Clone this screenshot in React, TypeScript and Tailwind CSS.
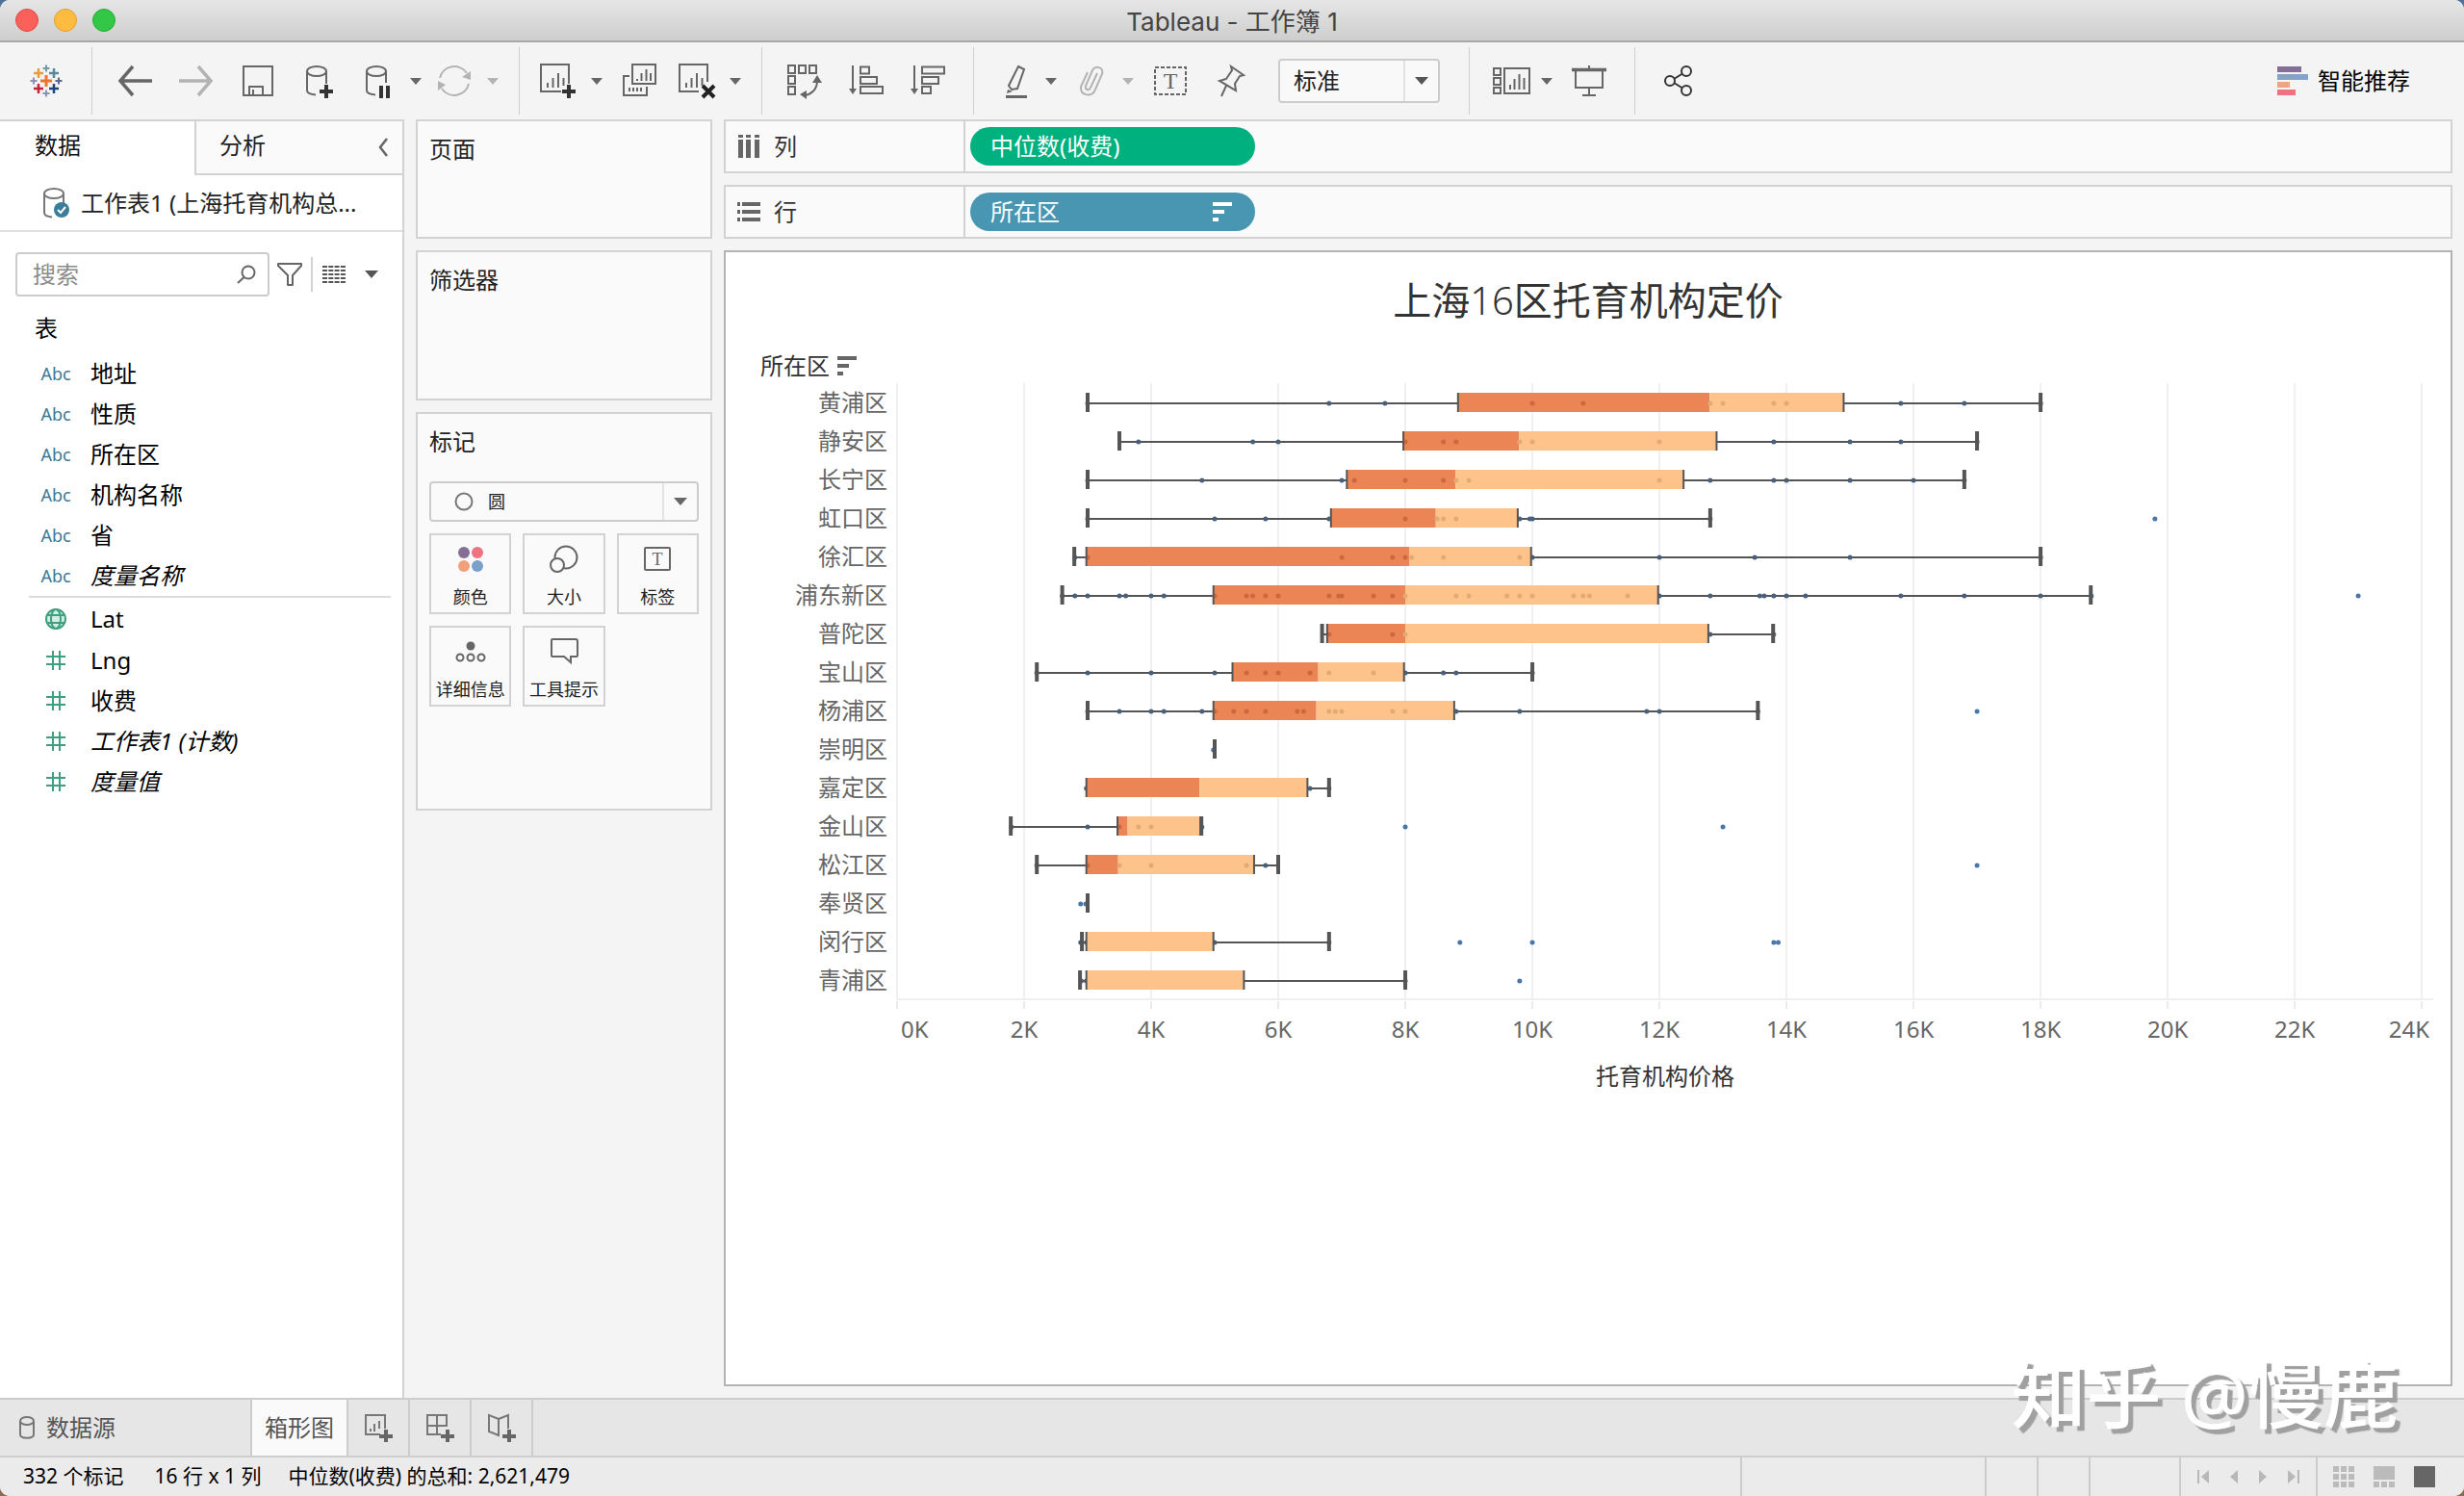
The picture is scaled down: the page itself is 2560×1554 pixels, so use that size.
import type { ReactNode } from "react";
import clsx from "clsx";

// ---------- data ----------

type Box = {
  name: string;
  low: number;
  high: number;
  q1?: number;
  mid?: number;
  q3?: number;
  dots: number[];
};

// highest value of the x axis, in thousands
const AXIS_MAX = 24.18;
const ROW_HEIGHT = 40;

const TICKS = [0, 2, 4, 6, 8, 10, 12, 14, 16, 18, 20, 22, 24];

const BOXES: Box[] = [
  { name: "黄浦区", low: 3, q1: 8.83, mid: 12.79, q3: 14.9, high: 18, dots: [3, 6.8, 7.68, 10, 10.8, 12.8, 13, 13.8, 14, 15.8, 16.8, 18] },
  { name: "静安区", low: 3.5, q1: 7.97, mid: 9.79, q3: 12.9, high: 17, dots: [3.8, 5.6, 6, 8, 8.6, 8.8, 9.8, 10, 12, 13.8, 15, 15.8, 17] },
  { name: "长宁区", low: 3, q1: 7.08, mid: 8.79, q3: 12.38, high: 16.8, dots: [3, 4.8, 7, 7.2, 8, 8.6, 8.8, 9, 12, 12.8, 13.8, 14, 15, 16, 16.8] },
  { name: "虹口区", low: 3, q1: 6.83, mid: 8.48, q3: 9.77, high: 12.8, dots: [3, 5, 5.8, 6.8, 8, 8.5, 8.6, 8.8, 9.8, 9.96, 10, 12.8, 19.8] },
  { name: "徐汇区", low: 2.79, q1: 2.98, mid: 8.06, q3: 9.98, high: 18, dots: [2.8, 3, 7, 7.8, 8, 8.1, 8.6, 9.8, 10, 12, 13.5, 15, 18] },
  { name: "浦东新区", low: 2.6, q1: 4.98, mid: 8, q3: 11.98, high: 18.79, dots: [2.6, 2.8, 3, 3.5, 3.6, 4, 4.2, 5, 5.5, 5.6, 5.8, 6, 6.8, 6.95, 7, 7.5, 7.8, 8, 8.8, 9, 9.6, 9.8, 10, 10.65, 10.8, 10.9, 11.5, 12, 12.8, 13.58, 13.65, 13.8, 14, 14.3, 15.8, 16.8, 18, 18.8, 23] },
  { name: "普陀区", low: 6.69, q1: 6.77, mid: 8, q3: 12.77, high: 13.79, dots: [6.8, 7.8, 8, 12.8, 13.8] },
  { name: "宝山区", low: 2.2, q1: 5.28, mid: 6.63, q3: 7.98, high: 10, dots: [2.2, 3, 4, 5, 5.5, 5.8, 6, 6.5, 6.8, 7.5, 8, 8.6, 8.8, 10] },
  { name: "杨浦区", low: 3, q1: 4.98, mid: 6.6, q3: 8.77, high: 13.55, dots: [3, 3.5, 4, 4.2, 4.8, 5, 5.3, 5.5, 5.8, 6.3, 6.4, 6.8, 6.9, 7, 7.8, 8, 8.8, 9.8, 11.8, 12, 13.55, 17] },
  { name: "崇明区", low: 5, high: 5, dots: [4.98] },
  { name: "嘉定区", low: 3, q1: 2.98, mid: 4.76, q3: 6.46, high: 6.8, dots: [2.98, 6.5, 6.8] },
  { name: "金山区", low: 1.79, q1: 3.47, mid: 3.63, q3: 4.78, high: 4.79, dots: [1.8, 3, 3.5, 3.8, 4, 4.8, 8, 13] },
  { name: "松江区", low: 2.2, q1: 2.98, mid: 3.48, q3: 5.62, high: 6, dots: [2.2, 3, 3.5, 4, 5.5, 5.8, 17] },
  { name: "奉贤区", low: 3, high: 3, dots: [2.89, 2.97] },
  { name: "闵行区", low: 2.91, q1: 2.98, mid: 2.98, q3: 4.98, high: 6.8, dots: [2.89, 2.98, 5, 6.8, 8.86, 10, 13.8, 13.87] },
  { name: "青浦区", low: 2.88, q1: 2.98, mid: 2.98, q3: 5.46, high: 8, dots: [2.9, 2.98, 8, 9.8] },
];

const FIELDS: { label: string; kind: "abc" | "globe" | "number"; italic?: boolean }[] = [
  { label: "地址", kind: "abc" },
  { label: "性质", kind: "abc" },
  { label: "所在区", kind: "abc" },
  { label: "机构名称", kind: "abc" },
  { label: "省", kind: "abc" },
  { label: "度量名称", kind: "abc", italic: true },
  { label: "Lat", kind: "globe" },
  { label: "Lng", kind: "number" },
  { label: "收费", kind: "number" },
  { label: "工作表1 (计数)", kind: "number", italic: true },
  { label: "度量值", kind: "number", italic: true },
];

// ---------- icons ----------

function Icon({ children, className }: { children: ReactNode; className?: string }) {
  return (
    <svg
      viewBox="0 0 40 40"
      className={clsx("w-10 h-10 shrink-0 overflow-visible", className ?? "text-[#666666]")}
      fill="none"
      stroke="currentColor"
      strokeWidth="2"
      aria-hidden="true"
    >
      {children}
    </svg>
  );
}

function Caret({ className }: { className?: string }) {
  return (
    <svg viewBox="0 0 14 8" className={clsx("shrink-0", className ?? "w-3 h-[7px] text-[#666666]")} fill="currentColor" aria-hidden="true">
      <path d="M0 0h14L7 8z" />
    </svg>
  );
}

function TableauLogo() {
  const marks: [number, number, number, number, string][] = [
    [20, 20, 6, 3, "#e8762c"],
    [12, 12, 5, 2.5, "#eb9a3c"],
    [28, 12, 5, 2.5, "#5b879b"],
    [12, 28, 5, 2.5, "#c72037"],
    [28, 28, 5, 2.5, "#1f447e"],
    [20, 7, 3.5, 2, "#7199a6"],
    [20, 33, 3.5, 2, "#8b92b4"],
    [7, 20, 3.5, 2, "#8b92b4"],
    [33, 20, 3.5, 2, "#5c6692"],
  ];
  return (
    <Icon>
      {marks.map(([x, y, r, w, color]) => (
        <path key={`${x}-${y}`} d={`M${x - r} ${y}h${r * 2}M${x} ${y - r}v${r * 2}`} stroke={color} strokeWidth={w} />
      ))}
    </Icon>
  );
}

const ArrowBack = () => (
  <Icon>
    <path d="M18 5L5 20l13 15M5 20h33" strokeWidth="3.5" />
  </Icon>
);

const ArrowForward = () => (
  <Icon className="text-[#b3b3b3]">
    <path d="M22 5l13 15-13 15M35 20H2" strokeWidth="3.5" />
  </Icon>
);

const Save = () => (
  <Icon>
    <path d="M5 5h30v30H5zM11 35v-9h14v9M15 29v6" />
  </Icon>
);

const DataPlus = () => (
  <Icon>
    <ellipse cx="17" cy="10" rx="10" ry="5" />
    <path d="M7 10v20c0 3 4 4 9 4.500M27 10v13" />
    <path d="M27 24v14M20 31h14" strokeWidth="4" className="text-[#333333]" stroke="currentColor" />
  </Icon>
);

const DataPause = () => (
  <Icon>
    <ellipse cx="19" cy="10" rx="10" ry="5" />
    <path d="M9 10v20c0 3 4 4 9 4.500M29 10v12" />
    <path d="M24 25v13M31 25v13" strokeWidth="4" className="text-[#333333]" stroke="currentColor" />
  </Icon>
);

const Refresh = () => (
  <Icon className="text-[#b3b3b3]">
    <path d="M5 17A15.500 15.500 0 0 1 33 12M35 23A15.500 15.500 0 0 1 7 28" />
    <path d="M37 10v9l-9-3zM3 30v-10l8 4z" fill="currentColor" stroke="none" />
  </Icon>
);

const SheetBars = () => <path d="M9 22v5M14.500 17v10M20 12v15M25.500 17v8" />;

const SheetPlus = () => (
  <Icon>
    <path d="M23 31H2V3h29v20" />
    <SheetBars />
    <path d="M31 24v14M24 31h14" strokeWidth="4" className="text-[#333333]" stroke="currentColor" />
  </Icon>
);

const SheetCopy = () => (
  <Icon>
    <path d="M13 3h24v20H13zM18 18v2M22.500 12v8M27.500 8v12M32 12v8" />
    <path d="M10 15H4v20h24v-9M10 27v4M14 27v4M18 27v4M22 27v4" />
  </Icon>
);

const SheetClear = () => (
  <Icon>
    <path d="M22 31H2V3h29v18" />
    <SheetBars />
    <path d="M26 25l12 12M38 25L26 37" strokeWidth="4" className="text-[#222222]" stroke="currentColor" />
  </Icon>
);

const Swap = () => (
  <Icon>
    <path d="M3 4h7v8H3zM14 4h7v8h-7zM25 4h7v8h-7zM3 15h7v8H3zM3 26h7v8H3z" />
    <path d="M33 20c0 9-6 14-13 15" />
    <path d="M28 22l5-8 5 8zM22 30v9l-7-5z" fill="currentColor" stroke="none" />
  </Icon>
);

const SortAsc = () => (
  <Icon>
    <path d="M6 4v26M14 5.500h9v7h-9zM14 16h17v7H14zM14 26h23v7H14z" />
    <path d="M2 28h8l-4 6z" fill="currentColor" stroke="none" />
  </Icon>
);

const SortDesc = () => (
  <Icon>
    <path d="M6 4v26M14 5.500h23v7H14zM14 16h17v7H14zM14 26h9v7h-9z" />
    <path d="M2 28h8l-4 6z" fill="currentColor" stroke="none" />
  </Icon>
);

const Highlighter = () => (
  <Icon>
    <path d="M26 5l6 3-7 20-6 1-3-4z" />
    <path d="M15 29l5 2-6 2z" fill="currentColor" stroke="none" />
    <path d="M13 36.500h22" strokeWidth="3" />
  </Icon>
);

const Clip = () => (
  <Icon className="text-[#b3b3b3]">
    <path d="M28 12l-7 15c-2 4-6 2-5-2l7-16c3-6 12-3 10 4l-8 18c-4 6-15 4-14-5l7-15" />
  </Icon>
);

const TextLabel = () => (
  <Icon>
    <rect x="4" y="6" width="32" height="28" strokeDasharray="4 2" />
    <text x="20" y="28" textAnchor="middle" fontSize="24" fill="currentColor" stroke="none" className="font-['Liberation_Serif',serif]">
      T
    </text>
  </Icon>
);

const Pin = () => (
  <Icon>
    <path d="M19 5l13 9-4 1-5 8 1 7-17-10 7-2 6-9zM14 25L9 36" />
  </Icon>
);

const Cards = () => (
  <Icon>
    <path d="M5 7h7v7H5zM5 17h7v7H5zM5 27h7v6H5zM16 7h26v26H16zM22 24v5M26.500 18v11M31.500 13v16M36.500 17v12" />
  </Icon>
);

const Presentation = () => (
  <Icon>
    <path d="M6 10v17h28V10M20 27v8M13 35h14M20 4v4" />
    <path d="M2 8.500h36" strokeWidth="3.5" />
  </Icon>
);

const Share = () => (
  <Icon className="text-[#333333]">
    <circle cx="29" cy="10" r="5" />
    <circle cx="12" cy="20" r="5" />
    <circle cx="29" cy="30" r="5" />
    <path d="M17 17.500l8-5M17 22.500l8 5" />
  </Icon>
);

function SortBars({ className }: { className?: string }) {
  return (
    <svg viewBox="0 0 20 20" className={clsx("w-5 h-5 shrink-0", className)} fill="currentColor" aria-hidden="true">
      <path d="M0 0h20v4H0zM0 8h12v4H0zM0 16h6v4H0z" />
    </svg>
  );
}

function FieldIcon({ kind }: { kind: "abc" | "globe" | "number" }) {
  if (kind === "abc") {
    return <span className="text-lg text-[#3c7896]">Abc</span>;
  }
  return (
    <svg viewBox="0 0 24 24" className="w-6 h-6 text-[#3fa07f]" fill="none" stroke="currentColor" strokeWidth="2" aria-hidden="true">
      {kind === "globe" ? (
        <>
          <circle cx="12" cy="12" r="10" fill="#d3efe5" />
          <ellipse cx="12" cy="12" rx="5" ry="10" />
          <path d="M3 8h18M3 16h18" />
        </>
      ) : (
        <path d="M9 2v20M16 2v20M2 8h20M2 16h20" />
      )}
    </svg>
  );
}

// ---------- toolbar ----------

function ToolButton({ label, children, narrow }: { label: string; children: ReactNode; narrow?: boolean }) {
  return (
    <button type="button" aria-label={label} className={clsx("h-16 flex items-center justify-center", narrow ? "w-14" : "w-16")}>
      {children}
    </button>
  );
}

function MenuButton({ label, disabled }: { label: string; disabled?: boolean }) {
  return (
    <button type="button" aria-label={label} disabled={disabled} className="w-6 h-16 flex items-center justify-center">
      <Caret className={disabled ? "w-3 h-[7px] text-[#b3b3b3]" : undefined} />
    </button>
  );
}

const Divider = () => <div className="w-px h-[70px] bg-[#cfcfcf]" />;

function Toolbar() {
  return (
    <div className="h-20 flex items-center bg-[#f4f4f4]">
      <button type="button" aria-label="Tableau" className="w-[95px] flex justify-center">
        <TableauLogo />
      </button>
      <Divider />
      <div className="flex items-center pl-3 pr-[15px]">
        <ToolButton label="撤消"><ArrowBack /></ToolButton>
        <ToolButton label="重做"><ArrowForward /></ToolButton>
        <ToolButton label="保存"><Save /></ToolButton>
        <ToolButton label="新建数据源"><DataPlus /></ToolButton>
        <ToolButton label="暂停自动更新" narrow><DataPause /></ToolButton>
        <MenuButton label="自动更新选项" />
        <ToolButton label="运行更新" narrow><Refresh /></ToolButton>
        <MenuButton label="更新选项" disabled />
      </div>
      <Divider />
      <div className="flex items-center pl-3 pr-[15px]">
        <ToolButton label="新建工作表" narrow><SheetPlus /></ToolButton>
        <MenuButton label="新建选项" />
        <ToolButton label="复制工作表"><SheetCopy /></ToolButton>
        <ToolButton label="清除工作表" narrow><SheetClear /></ToolButton>
        <MenuButton label="清除选项" />
      </div>
      <Divider />
      <div className="flex items-center pl-3 pr-[15px]">
        <ToolButton label="交换行和列"><Swap /></ToolButton>
        <ToolButton label="升序排序"><SortAsc /></ToolButton>
        <ToolButton label="降序排序"><SortDesc /></ToolButton>
      </div>
      <Divider />
      <div className="flex items-center pl-3 pr-[30px]">
        <ToolButton label="突出显示" narrow><Highlighter /></ToolButton>
        <MenuButton label="突出显示选项" />
        <ToolButton label="组成员" narrow><Clip /></ToolButton>
        <MenuButton label="组选项" disabled />
        <ToolButton label="显示标记标签"><TextLabel /></ToolButton>
        <ToolButton label="固定轴"><Pin /></ToolButton>
        <div className="ml-4 w-[168px] h-[46px] flex border-2 border-[#cccccc] rounded-sm bg-[#f9f9f9]">
          <select aria-label="适合" className="flex-1 min-w-0 appearance-none pl-3.5 text-2xl leading-9 text-[#222222]">
            <option>标准</option>
          </select>
          <div className="w-9 border-l-2 border-[#e3e3e3] flex items-center justify-center pointer-events-none">
            <Caret className="w-3.5 h-2 text-[#555555]" />
          </div>
        </div>
      </div>
      <Divider />
      <div className="flex items-center pl-3 pr-[15px]">
        <ToolButton label="显示/隐藏卡" narrow><Cards /></ToolButton>
        <MenuButton label="卡选项" />
        <ToolButton label="演示模式"><Presentation /></ToolButton>
      </div>
      <Divider />
      <div className="pl-3">
        <ToolButton label="共享"><Share /></ToolButton>
      </div>
      <button type="button" className="ml-auto mr-14 flex items-center gap-2.5 text-2xl text-black">
        <svg viewBox="0 0 32 30" className="w-8 h-[30px]" aria-hidden="true">
          <path d="M0 0h25v6H0z" fill="#856f96" />
          <path d="M0 8h32v6H0z" fill="#84a3c8" />
          <path d="M0 16h13v6H0z" fill="#eda684" />
          <path d="M0 24h19v6H0z" fill="#f0717f" />
        </svg>
        智能推荐
      </button>
    </div>
  );
}

// ---------- data pane ----------

function DataPane() {
  return (
    <aside className="w-[420px] shrink-0 flex flex-col bg-white border-t-2 border-r-2 border-[#d2d2d2]">
      <div className="flex h-14 text-2xl leading-[50px]">
        <button type="button" className="w-[202px] pl-9 pb-1.5 text-left text-[#111111]">数据</button>
        <div className="flex-1 flex items-center justify-between pl-6 pr-3.5 bg-[#fafafa] border-l-2 border-b-2 border-[#d2d2d2]">
          <button type="button" className="pb-1 text-[#222222]">分析</button>
          <button type="button" aria-label="折叠">
            <svg viewBox="0 0 12 20" className="w-3 h-5" fill="none" stroke="#666666" strokeWidth="2.5" aria-hidden="true">
              <path d="M10 1L3 10l7 9" />
            </svg>
          </button>
        </div>
      </div>
      <button type="button" className="h-[59px] flex items-center gap-3 pl-11 border-b-2 border-[#e0e0e0] text-2xl text-[#222222]">
        <svg viewBox="0 0 28 34" className="w-7 h-[34px] shrink-0" fill="none" stroke="#777777" strokeWidth="2" aria-hidden="true">
          <ellipse cx="12" cy="7" rx="10" ry="5" />
          <path d="M2 7v20c0 3 3 4 8 4.500M22 7v10" />
          <circle cx="20" cy="24" r="8" fill="#3a7c99" stroke="none" />
          <path d="M16 24l3 3 5-6" stroke="#ffffff" />
        </svg>
        工作表1 (上海托育机构总...
      </button>
      <div className="flex items-center mt-[21px] ml-4">
        <label className="w-[264px] h-[46px] flex items-center pl-3.5 pr-3 border-2 border-[#cccccc] rounded-sm">
          <input type="text" placeholder="搜索" aria-label="搜索" className="flex-1 min-w-0 pl-0.5 text-2xl leading-9 outline-none placeholder:text-[#8c8c8c]" />
          <svg viewBox="0 0 20 20" className="w-5 h-5" fill="none" stroke="#666666" strokeWidth="2" aria-hidden="true">
            <circle cx="12" cy="8" r="6.500" />
            <path d="M7.500 13L1 19" />
          </svg>
        </label>
        <button type="button" aria-label="筛选字段" className="ml-[7px]">
          <svg viewBox="0 0 28 28" className="w-7 h-7" fill="none" stroke="#666666" strokeWidth="2" strokeLinejoin="round" aria-hidden="true">
            <path d="M2 3h24v2L17 15v10h-5V15L2 5z" />
          </svg>
        </button>
        <div className="mx-2 w-0.5 h-9 bg-[#d2d2d2]" />
        <button type="button" aria-label="视图" className="ml-0.5 flex items-center gap-5">
          <svg viewBox="0 0 24 20" className="w-6 h-5" stroke="#555555" strokeWidth="2" aria-hidden="true">
            <path d="M0 2h24M0 6h24M0 10h24M0 14h24M0 18h24" strokeDasharray="5 1.300" />
          </svg>
          <Caret className="w-3.5 h-2 text-[#555555]" />
        </button>
      </div>
      <h2 className="mt-[15px] pl-9 text-2xl leading-9 text-black">表</h2>
      <ul className="mt-2 pl-[30px] pr-3 text-2xl text-black">
        {FIELDS.map((field) => (
          <li
            key={field.label}
            className={clsx(
              "flex items-center",
              field.kind === "globe" ? "h-[46px] border-t-2 border-[#dddddd]" : "h-[42px]",
            )}
          >
            <span className="w-14 flex justify-center shrink-0">
              <FieldIcon kind={field.kind} />
            </span>
            <span className={clsx("pl-2 leading-9", field.italic && "italic")}>{field.label}</span>
          </li>
        ))}
      </ul>
    </aside>
  );
}

// ---------- cards ----------

function MarkButton({ label, children }: { label: string; children: ReactNode }) {
  return (
    <button type="button" className="h-[84px] flex flex-col items-center justify-between pt-1 pb-0.5 border-2 border-[#d2d2d2] text-lg leading-7 text-[#222222] whitespace-nowrap">
      {children}
      {label}
    </button>
  );
}

function CardColumn() {
  return (
    <div className="w-[308px] shrink-0 flex flex-col gap-3 text-2xl leading-9 text-[#222222]">
      <section className="h-[124px] px-3 pt-[11px] bg-[#fafafa] border-2 border-[#d2d2d2]">页面</section>
      <section className="h-[156px] px-3 pt-[11px] bg-[#fafafa] border-2 border-[#d2d2d2]">筛选器</section>
      <section className="h-[414px] px-3 pt-[11px] bg-[#fafafa] border-2 border-[#d2d2d2]">
        <h2>标记</h2>
        <div className="mt-[23px] h-[42px] flex items-center border-2 border-[#cccccc] rounded-sm">
          <svg viewBox="0 0 20 20" className="ml-6 w-5 h-5" fill="none" stroke="#777777" strokeWidth="2" aria-hidden="true">
            <circle cx="10" cy="10" r="8.500" />
          </svg>
          <select aria-label="标记类型" className="ml-[15px] flex-1 min-w-0 appearance-none text-lg leading-7">
            <option>圆</option>
          </select>
          <div className="w-9 h-full border-l-2 border-[#e3e3e3] flex items-center justify-center pointer-events-none">
            <Caret className="w-3.5 h-2 text-[#666666]" />
          </div>
        </div>
        <div className="mt-3 grid grid-cols-3 gap-3">
          <MarkButton label="颜色">
            <Icon>
              <circle cx="13" cy="14" r="6" fill="#856f96" stroke="none" />
              <circle cx="27" cy="14" r="6" fill="#f0717f" stroke="none" />
              <circle cx="13" cy="28" r="6" fill="#f1a07c" stroke="none" />
              <circle cx="27" cy="28" r="6" fill="#7ba0ca" stroke="none" />
            </Icon>
          </MarkButton>
          <MarkButton label="大小">
            <Icon>
              <circle cx="22" cy="19" r="11.500" />
              <circle cx="13" cy="27" r="7" fill="#fafafa" />
            </Icon>
          </MarkButton>
          <MarkButton label="标签">
            <Icon>
              <rect x="7" y="9" width="26" height="23" rx="1" />
              <text x="20" y="27" textAnchor="middle" fontSize="18" fill="currentColor" stroke="none" className="font-['Liberation_Serif',serif]">
                T
              </text>
            </Icon>
          </MarkButton>
          <MarkButton label="详细信息">
            <Icon>
              <circle cx="20" cy="15" r="4.500" fill="currentColor" stroke="none" />
              <circle cx="9" cy="27" r="3.500" />
              <circle cx="20" cy="27" r="3.500" />
              <circle cx="31" cy="27" r="3.500" />
            </Icon>
          </MarkButton>
          <MarkButton label="工具提示">
            <Icon>
              <path d="M8 8h24a2 2 0 0 1 2 2v15a1 1 0 0 1-1 1h-6v6l-7-6H8a1 1 0 0 1-1-1V9a1 1 0 0 1 1-1z" />
            </Icon>
          </MarkButton>
        </div>
      </section>
    </div>
  );
}

// ---------- sheet ----------

function Shelf({ label, icon, children }: { label: string; icon: ReactNode; children: ReactNode }) {
  return (
    <div className="h-14 shrink-0 flex bg-[#fafafa] border-2 border-[#d2d2d2] text-2xl leading-9">
      <div className="w-[249px] flex items-center gap-3.5 pl-3 border-r-2 border-[#d2d2d2] text-[#333333]">
        {icon}
        {label}
      </div>
      <div className="flex items-center pl-[5px]">{children}</div>
    </div>
  );
}

const pct = (value: number) => `${(value / AXIS_MAX) * 100}%`;

function BoxRow({ box, y }: { box: Box; y: number }) {
  const { low, high, q1, mid, q3, dots } = box;
  const hasBox = q1 !== undefined && mid !== undefined && q3 !== undefined;
  const covered = (value: number) => hasBox && value > q1 && value < q3;
  return (
    <g>
      {hasBox && (
        <>
          <line x1={pct(low)} x2={pct(q1)} y1={y + 1} y2={y + 1} stroke="#555555" strokeWidth="2" />
          <line x1={pct(q3)} x2={pct(high)} y1={y + 1} y2={y + 1} stroke="#555555" strokeWidth="2" />
        </>
      )}
      {dots.filter((value) => !covered(value)).map((value) => (
        <circle key={value} cx={pct(value)} cy={y + 1} r="2.5" fill={value > high || !hasBox ? "#4a77a8" : "#48607a"} />
      ))}
      {hasBox && (
        <>
          <rect x={pct(q1)} width={pct(mid - q1)} y={y - 10} height="20" fill="#ec8555" />
          <rect x={pct(mid)} width={pct(q3 - mid)} y={y - 10} height="20" fill="#fec38a" />
          {dots.filter(covered).map((value) => (
            <circle key={value} cx={pct(value)} cy={y + 1} r="2.5" fill={value < mid ? "#cb683f" : "#e2aa76"} />
          ))}
          <line x1={pct(q1)} x2={pct(q1)} y1={y - 10} y2={y + 10} stroke="#555555" strokeWidth="2" />
          <line x1={pct(q3)} x2={pct(q3)} y1={y - 10} y2={y + 10} stroke="#555555" strokeWidth="2" />
        </>
      )}
      {low !== q1 && !(hasBox && low > q1) && (
        <line x1={pct(low)} x2={pct(low)} y1={y - 10} y2={y + 10} stroke="#555555" strokeWidth="4" />
      )}
      <line x1={pct(high)} x2={pct(high)} y1={y - 10} y2={y + 10} stroke="#555555" strokeWidth="4" />
    </g>
  );
}

function BoxPlot() {
  const height = BOXES.length * ROW_HEIGHT;
  return (
    <svg className="block w-full h-[690px] overflow-visible" role="img" aria-label="上海16区托育机构定价">
      {TICKS.map((tick) => (
        <g key={tick}>
          <line x1={pct(tick)} x2={pct(tick)} y1="0" y2={height} stroke="#f0f0f0" strokeWidth="2" />
          <line x1={pct(tick)} x2={pct(tick)} y1={height + 2} y2={height + 10} stroke="#ebebeb" strokeWidth="2" />
          <text
            x={tick === 24 ? "100%" : pct(tick)}
            dx={tick === 0 ? 4 : tick === 24 ? -4 : 0}
            y={height + 40}
            textAnchor={tick === 0 ? "start" : tick === 24 ? "end" : "middle"}
            fontSize="24"
            fill="#666666"
          >
            {tick}K
          </text>
        </g>
      ))}
      <line x1="0" x2="100%" y1={height} y2={height} stroke="#efefef" strokeWidth="2" />
      {BOXES.map((box, i) => (
        <BoxRow key={box.name} box={box} y={i * ROW_HEIGHT + ROW_HEIGHT / 2} />
      ))}
    </svg>
  );
}

function Sheet() {
  return (
    <main className="flex-1 min-w-0 flex flex-col gap-3">
      <Shelf
        label="列"
        icon={
          <svg viewBox="0 0 24 24" className="w-6 h-6" fill="#666666" aria-hidden="true">
            <path d="M1 0h5v3H1zM9 0h5v3H9zM18 0h5v3h-5zM1 5h5v19H1zM9 5h5v19H9zM18 5h5v19h-5z" />
          </svg>
        }
      >
        <button type="button" className="w-[296px] h-10 flex items-center px-[21px] rounded-[20px] bg-[#00b180] text-white">
          中位数(收费)
        </button>
      </Shelf>
      <Shelf
        label="行"
        icon={
          <svg viewBox="0 0 24 24" className="w-6 h-6" fill="#666666" aria-hidden="true">
            <path d="M0 2h3v4H0zM0 10h3v4H0zM0 18h3v4H0zM5 2h19v4H5zM5 10h19v4H5zM5 18h19v4H5z" />
          </svg>
        }
      >
        <button type="button" className="w-[296px] h-10 flex items-center justify-between pl-[21px] pr-6 rounded-[20px] bg-[#4996b2] text-white">
          所在区
          <SortBars />
        </button>
      </Shelf>
      <section className="flex-1 bg-white border-2 border-[#b3b3b3]">
        <h1 className="pt-5 pb-5 text-center text-[40px] leading-[60px] text-[#333333]">
          上海<span className="font-light">16</span>区托育机构定价
        </h1>
        <div className="h-9 flex items-center gap-2 pl-9 text-2xl text-[#333333]">
          所在区
          <SortBars className="text-[#666666]" />
        </div>
        <div className="flex pr-[18px]">
          <ul className="w-[178px] shrink-0 pr-2.5 text-right text-2xl text-[#666666]">
            {BOXES.map((box) => (
              <li key={box.name} className="h-10 leading-10">{box.name}</li>
            ))}
          </ul>
          <div className="flex-1 min-w-0">
            <BoxPlot />
            <p className="text-center text-2xl leading-[60px] text-[#333333]">托育机构价格</p>
          </div>
        </div>
      </section>
    </main>
  );
}

// ---------- bottom bars ----------

function SheetTabs() {
  return (
    <nav className="h-[60px] flex bg-[#e6e6e6] border-t-2 border-[#cccccc] text-2xl leading-9 text-[#555555]">
      <button type="button" className="w-[262px] flex items-center gap-3 pl-5 border-r-2 border-[#cccccc]">
        <svg viewBox="0 0 16 24" className="w-4 h-6" fill="none" stroke="#777777" strokeWidth="2" aria-hidden="true">
          <ellipse cx="8" cy="5" rx="7" ry="4" />
          <path d="M1 5v14c0 5 14 5 14 0V5" />
        </svg>
        数据源
      </button>
      <button type="button" className="w-[100px] bg-[#fafafa] border-r-2 border-[#cccccc]">箱形图</button>
      <button type="button" aria-label="新建工作表" className="w-16 flex items-center justify-center border-r-2 border-[#cccccc]">
        <svg viewBox="0 0 32 32" className="w-8 h-8" fill="none" stroke="#777777" strokeWidth="2" aria-hidden="true">
          <path d="M18 23H3V3h20v14M8 17v3M12 12v8M17 9v8" />
          <path d="M24 18v13M17 25h14" stroke="#666666" strokeWidth="4" />
        </svg>
      </button>
      <button type="button" aria-label="新建仪表板" className="w-16 flex items-center justify-center border-r-2 border-[#cccccc]">
        <svg viewBox="0 0 32 32" className="w-8 h-8" fill="none" stroke="#777777" strokeWidth="2" aria-hidden="true">
          <path d="M17 23H3V3h20v11H3M13 3v20" />
          <path d="M24 18v13M17 25h14" stroke="#666666" strokeWidth="4" />
        </svg>
      </button>
      <button type="button" aria-label="新建故事" className="w-16 flex items-center justify-center border-r-2 border-[#cccccc]">
        <svg viewBox="0 0 32 32" className="w-8 h-8" fill="none" stroke="#777777" strokeWidth="2" aria-hidden="true">
          <path d="M13 7L3 3v17l10 4zM13 7l10-4v14" />
          <path d="M24 18v13M17 25h14" stroke="#666666" strokeWidth="4" />
        </svg>
      </button>
    </nav>
  );
}

function StatusBar() {
  return (
    <footer className="h-[42px] flex items-center bg-[#ebebeb] border-t-2 border-[#cecece] text-[21px] text-black">
      <span className="pl-6">332 个标记</span>
      <span className="pl-8">16 行 x 1 列</span>
      <span className="pl-7">中位数(收费) 的总和: 2,621,479</span>
      <div className="ml-auto h-full flex">
        <div className="w-[254px] border-l-2 border-[#cccccc]" />
        <div className="w-[54px] border-l-2 border-[#cccccc]" />
        <div className="w-[54px] border-l-2 border-[#cccccc]" />
        <div className="w-[94px] border-l-2 border-[#cccccc]" />
        <div className="w-[142px] flex items-center justify-center gap-[22px] border-l-2 border-[#cccccc] text-[#b8b8b8]">
          <button type="button" aria-label="第一个">
            <svg viewBox="0 0 12 14" className="w-3 h-3.5" fill="currentColor" aria-hidden="true"><path d="M0 0h2v14H0zM12 0v14L4 7z" /></svg>
          </button>
          <button type="button" aria-label="上一个">
            <svg viewBox="0 0 8 14" className="w-2 h-3.5" fill="currentColor" aria-hidden="true"><path d="M8 0v14L0 7z" /></svg>
          </button>
          <button type="button" aria-label="下一个">
            <svg viewBox="0 0 8 14" className="w-2 h-3.5" fill="currentColor" aria-hidden="true"><path d="M0 0v14l8-7z" /></svg>
          </button>
          <button type="button" aria-label="最后一个">
            <svg viewBox="0 0 12 14" className="w-3 h-3.5" fill="currentColor" aria-hidden="true"><path d="M10 0h2v14h-2zM0 0v14l8-7z" /></svg>
          </button>
        </div>
        <div className="w-[154px] flex items-center gap-5 pl-4 border-l-2 border-[#cccccc] text-[#bbbbbb]">
          <button type="button" aria-label="工作表排序程序">
            <svg viewBox="0 0 22 22" className="w-[22px] h-[22px]" fill="currentColor" aria-hidden="true">
              <path d="M0 0h6v6H0zM8 0h6v6H8zM16 0h6v6h-6zM0 8h6v6H0zM8 8h6v6H8zM16 8h6v6h-6zM0 16h6v6H0zM8 16h6v6H8zM16 16h6v6h-6z" />
            </svg>
          </button>
          <button type="button" aria-label="显示缩略图">
            <svg viewBox="0 0 22 22" className="w-[22px] h-[22px]" fill="currentColor" aria-hidden="true">
              <path d="M0 0h22v14H0zM0 16h6v6H0zM8 16h6v6H8zM16 16h6v6h-6z" />
            </svg>
          </button>
          <button type="button" aria-label="显示标签" className="w-[22px] h-[22px] bg-[#666666]" />
        </div>
      </div>
    </footer>
  );
}

export default function App() {
  return (
    <div className="min-h-screen flex bg-linear-to-b from-[#4d7296] to-[#8a6b50] font-['Noto_Sans','Noto_Sans_CJK_SC',sans-serif]">
      <div className="relative flex-1 min-w-0 flex flex-col rounded-[10px] overflow-hidden bg-[#f4f4f4]">
        <header className="h-11 grid grid-cols-3 items-center bg-linear-to-b from-[#e6e6e6] to-[#cecece] border-b-2 border-[#a8a8a8]">
          <div className="flex gap-4 pl-4">
            <button type="button" aria-label="关闭" className="w-6 h-6 rounded-full bg-[#fc605b] border border-[#df4744]" />
            <button type="button" aria-label="最小化" className="w-6 h-6 rounded-full bg-[#fdbc40] border border-[#de9f34]" />
            <button type="button" aria-label="缩放" className="w-6 h-6 rounded-full bg-[#33c748] border border-[#27aa35]" />
          </div>
          <div className="pt-1 text-center text-[26px] leading-9 text-[#444444] font-['Inter','Noto_Sans_CJK_SC',sans-serif]">
            Tableau - 工作簿 1
          </div>
        </header>
        <Toolbar />
        <div className="flex-1 flex gap-3">
          <DataPane />
          <div className="flex-1 min-w-0 flex gap-3 pr-3 pb-3">
            <CardColumn />
            <Sheet />
          </div>
        </div>
        <SheetTabs />
        <StatusBar />
        <div className="absolute right-[68px] bottom-14 text-[78px] leading-[100px] font-medium text-white [text-shadow:5px_5px_1px_#a0a0a0] pointer-events-none">
          知乎 @慢鹿
        </div>
      </div>
    </div>
  );
}
